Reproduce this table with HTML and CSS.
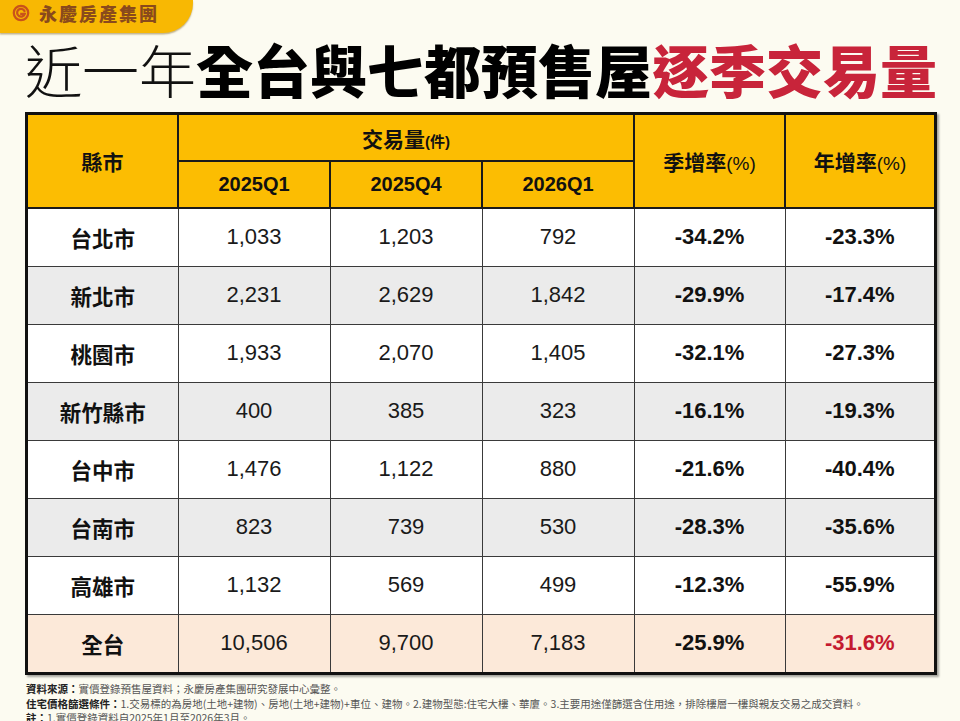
FILE: index.html
```html
<!DOCTYPE html>
<html lang="zh-Hant">
<head>
<meta charset="utf-8">
<title>近一年全台與七都預售屋逐季交易量</title>
<link rel="stylesheet" href="styles.css">
</head>
<body>
<div class="page">
  <div class="brand">
    <svg class="brand-icon" viewBox="0 0 24 24" width="18" height="18">
      <circle cx="12" cy="12" r="9.6" fill="none" stroke="#c9531b" stroke-width="3"/>
      <path d="M16.6 9.2 A5.2 5.2 0 1 0 17 13.2 L12.4 13.2" fill="none" stroke="#c9531b" stroke-width="3" stroke-linecap="square"/>
    </svg>
    <span class="brand-name">永慶房產集團</span>
  </div>
  <h1 class="title"><span class="t-light">近一年</span><span class="t-bold">全台與七都預售屋</span><span class="t-red">逐季交易量</span></h1>
  <div class="table-wrap">
    <table class="data">
      <colgroup>
        <col class="c1"><col class="c2"><col class="c3"><col class="c4"><col class="c5"><col class="c6">
      </colgroup>
      <thead>
        <tr class="h1">
          <th rowspan="2">縣市</th>
          <th colspan="3">交易量<span class="sm">(件)</span></th>
          <th rowspan="2">季增率<span class="pct">(%)</span></th>
          <th rowspan="2">年增率<span class="pct">(%)</span></th>
        </tr>
        <tr class="h2">
          <th class="q">2025Q1</th>
          <th class="q">2025Q4</th>
          <th class="q">2026Q1</th>
        </tr>
      </thead>
      <tbody>
        <tr><td class="city">台北市</td><td>1,033</td><td>1,203</td><td>792</td><td class="rate">-34.2%</td><td class="rate">-23.3%</td></tr>
        <tr class="alt"><td class="city">新北市</td><td>2,231</td><td>2,629</td><td>1,842</td><td class="rate">-29.9%</td><td class="rate">-17.4%</td></tr>
        <tr><td class="city">桃園市</td><td>1,933</td><td>2,070</td><td>1,405</td><td class="rate">-32.1%</td><td class="rate">-27.3%</td></tr>
        <tr class="alt"><td class="city">新竹縣市</td><td>400</td><td>385</td><td>323</td><td class="rate">-16.1%</td><td class="rate">-19.3%</td></tr>
        <tr><td class="city">台中市</td><td>1,476</td><td>1,122</td><td>880</td><td class="rate">-21.6%</td><td class="rate">-40.4%</td></tr>
        <tr class="alt"><td class="city">台南市</td><td>823</td><td>739</td><td>530</td><td class="rate">-28.3%</td><td class="rate">-35.6%</td></tr>
        <tr><td class="city">高雄市</td><td>1,132</td><td>569</td><td>499</td><td class="rate">-12.3%</td><td class="rate">-55.9%</td></tr>
        <tr class="total"><td class="city">全台</td><td>10,506</td><td>9,700</td><td>7,183</td><td class="rate">-25.9%</td><td class="rate red">-31.6%</td></tr>
      </tbody>
    </table>
  </div>
  <div class="notes">
    <p><b>資料來源：</b>實價登錄預售屋資料；永慶房產集團研究發展中心彙整。</p>
    <p><b>住宅價格篩選條件：</b>1.交易標的為房地(土地+建物)、房地(土地+建物)+車位、建物。2.建物型態:住宅大樓、華廈。3.主要用途僅篩選含住用途，排除樓層一樓與親友交易之成交資料。</p>
    <p><b>註：</b>1.實價登錄資料自2025年1月至2026年3月。</p>
  </div>
</div>
</body>
</html>
```
FILE: styles.css
```css
* { box-sizing: border-box; }
html, body { margin: 0; padding: 0; }
body {
  background: #fcfbf1;
  font-family: "Noto Sans CJK TC", "Noto Sans CJK SC", sans-serif;
  color: #111;
}
.page {
  width: 960px;
  height: 721px;
  overflow: hidden;
}
.brand {
  width: 193px;
  height: 33px;
  background: #f8b803;
  border-bottom-right-radius: 30px;
  box-shadow: 0 1.5px 1.5px rgba(120, 90, 20, 0.45);
  display: flex;
  align-items: center;
  padding-left: 12px;
  padding-bottom: 8px;
  gap: 9px;
}
.brand-icon { display: block; flex: none; }
.brand-name {
  font-weight: 900;
  font-size: 18px;
  line-height: 18px;
  color: #8a4a1c;
  letter-spacing: 2px;
}
.title {
  margin: 0 0 9px 0;
  padding-left: 25px;
  font-size: 57px;
  line-height: 70px;
  height: 70px;
  white-space: nowrap;
  font-weight: 400;
  letter-spacing: 0;
}
.t-light { font-weight: 300; color: #111; }
.t-bold { font-weight: 900; color: #000; }
.t-red { font-weight: 900; color: #c8243a; }

.table-wrap {
  margin-left: 25px;
  width: 912px;
  border: 3px solid #111;
  background: #fff;
  box-shadow: 2px 2px 2px rgba(0, 0, 0, 0.35);
}
.data {
  width: 906px;
  border-collapse: collapse;
  table-layout: fixed;
}
.c1 { width: 150px; }
.c2, .c3, .c4 { width: 152px; }
.c5 { width: 151px; }
.c6 { width: 149px; }

.data th, .data td {
  padding: 0;
  text-align: center;
  vertical-align: middle;
}
.data th {
  background: #fcbd02;
  font-weight: 700;
  font-size: 21px;
  border: 2px solid #1a1a1a;
  color: #111;
}
.data thead tr:first-child th { border-top: none; }
.data tr > :first-child { border-left: none; }
.data tr > :last-child { border-right: none; }
.data th[rowspan]:last-child { border-right: none; }
.h1 { height: 46px; }
.h2 { height: 47px; }
.data th.q {
  font-family: "Liberation Sans", Arial, sans-serif;
  font-size: 20px;
  font-weight: 700;
}
.sm {
  font-family: "Liberation Sans", "Noto Sans CJK TC", sans-serif;
  font-size: 15px;
  font-weight: 700;
}
.pct {
  font-family: "Liberation Sans", Arial, sans-serif;
  font-size: 19px;
  font-weight: 400;
}
.data tbody tr { height: 58px; }
.data td {
  border: 1px solid #3a3a3a;
  font-family: "Liberation Sans", Arial, sans-serif;
  font-size: 22px;
  color: #1a1a1a;
}
.data tbody tr:last-child td { border-bottom: none; }
.data td.city {
  font-family: "Noto Sans CJK TC", sans-serif;
  font-weight: 700;
  font-size: 21.5px;
  color: #111;
}
.data td.rate { font-weight: 700; color: #111; }
.data td.red { color: #c41a30; }
.alt td { background: #ebebeb; }
.total td { background: #fce9d9; }

.notes {
  margin-top: 7px;
  padding-left: 26px;
  font-size: 10.5px;
  line-height: 14.5px;
  color: #555;
}
.notes p { margin: 0; white-space: nowrap; }
.notes b { color: #222; font-weight: 700; }
```
